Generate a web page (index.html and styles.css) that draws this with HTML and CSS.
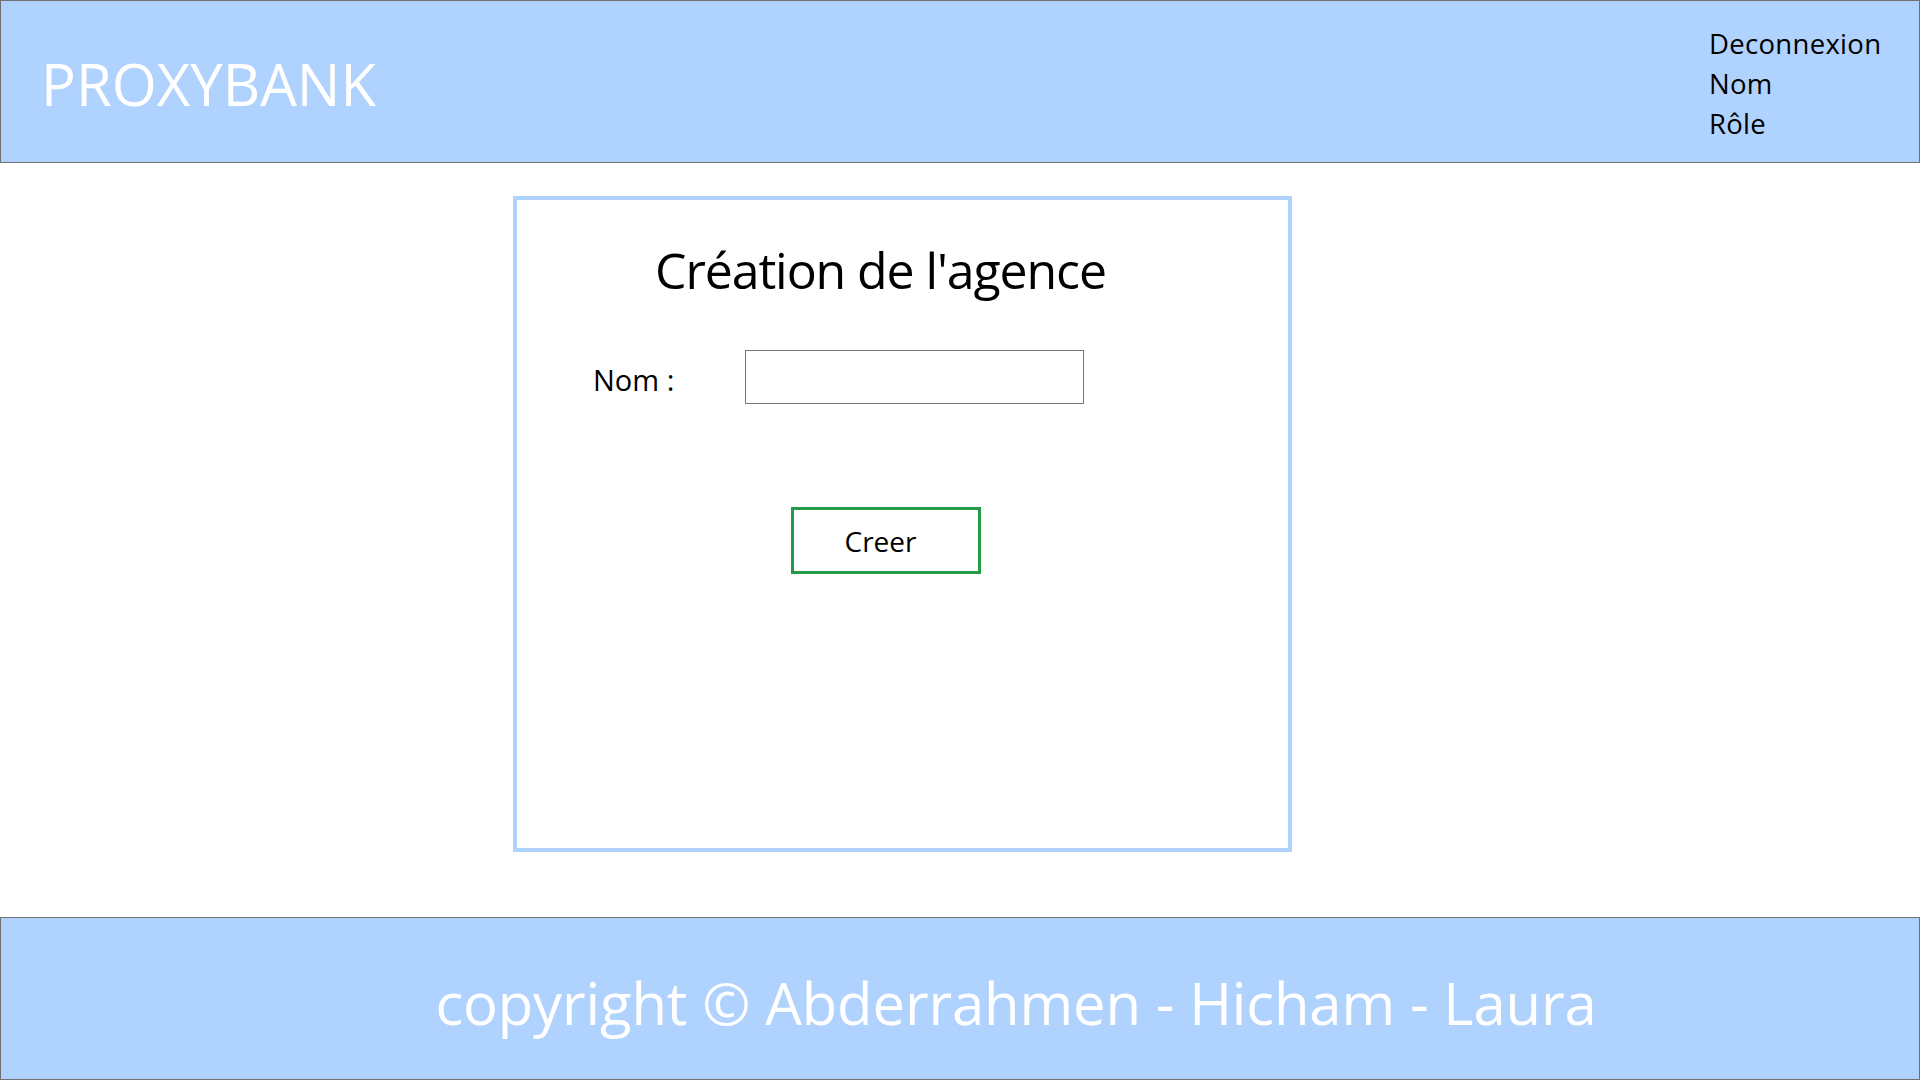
FILE: index.html
```html
<!DOCTYPE html>
<html lang="fr">
<head>
<meta charset="utf-8">
<title>ProxyBank - Création de l'agence</title>
<link rel="stylesheet" href="styles.css">
</head>
<body>
<div class="page">
  <header class="header">
    <div class="logo">PROXYBANK</div>
    <nav class="menu">
      <a class="menu-item" href="#">Deconnexion</a>
      <span class="menu-item">Nom</span>
      <span class="menu-item">Rôle</span>
    </nav>
  </header>
  <main class="main">
    <section class="card">
      <h1 class="title">Création de l'agence</h1>
      <div class="field">
        <label class="label" for="nom">Nom :</label>
        <input class="input" id="nom" type="text">
      </div>
      <button class="btn" type="button">Creer</button>
    </section>
  </main>
  <footer class="footer">copyright © Abderrahmen - Hicham - Laura</footer>
</div>
</body>
</html>
```
FILE: styles.css
```css
html, body {
  margin: 0;
  padding: 0;
  background: #ffffff;
}
body {
  font-family: "Open Sans", "Noto Sans", sans-serif;
  color: #000;
}
.page {
  display: flex;
  flex-direction: column;
  width: 1920px;
  height: 1080px;
}
.header {
  box-sizing: border-box;
  height: 163px;
  border: 1px solid #707070;
  background: #b0d2fe;
  display: flex;
  justify-content: space-between;
  align-items: center;
  padding: 0 30px 0 40px;
}
.logo {
  color: #fff;
  font-size: 58px;
  line-height: 70px;
  margin-top: 4px;
}
.menu {
  display: flex;
  flex-direction: column;
  width: 180px;
  margin-top: 4px;
}
.menu-item {
  color: #000;
  text-decoration: none;
  font-size: 27.5px;
  line-height: 40px;
  letter-spacing: 0.3px;
}
.main {
  flex: 1;
  padding: 33px 0 0 513px;
}
.card {
  box-sizing: border-box;
  width: 779px;
  height: 656px;
  border: 4px solid #b0d2fe;
  padding: 38px 0 0 0;
}
.title {
  margin: 0 0 0 138px;
  font-weight: normal;
  font-size: 50px;
  line-height: 64px;
  letter-spacing: -1.1px;
}
.field {
  display: flex;
  align-items: center;
  margin: 48px 0 0 76px;
}
.label {
  width: 152px;
  font-size: 29px;
  line-height: 40px;
  padding-top: 5px;
}
.input {
  box-sizing: border-box;
  width: 339px;
  height: 54px;
  border: 1px solid #777;
  margin: 0;
  padding: 0 8px;
  font: inherit;
  font-size: 24px;
}
.btn {
  display: block;
  box-sizing: border-box;
  width: 190px;
  height: 67px;
  margin: 103px 0 0 274px;
  border: 3px solid #259b47;
  background: #fff;
  font-family: inherit;
  font-size: 28px;
  color: #000;
  padding: 0 11px 0 0;
}
.footer {
  box-sizing: border-box;
  height: 163px;
  border: 1px solid #707070;
  background: #b0d2fe;
  color: #fff;
  font-size: 58px;
  letter-spacing: -0.15px;
  display: flex;
  align-items: center;
  justify-content: center;
  padding: 8px 0 0 112px;
}
```
